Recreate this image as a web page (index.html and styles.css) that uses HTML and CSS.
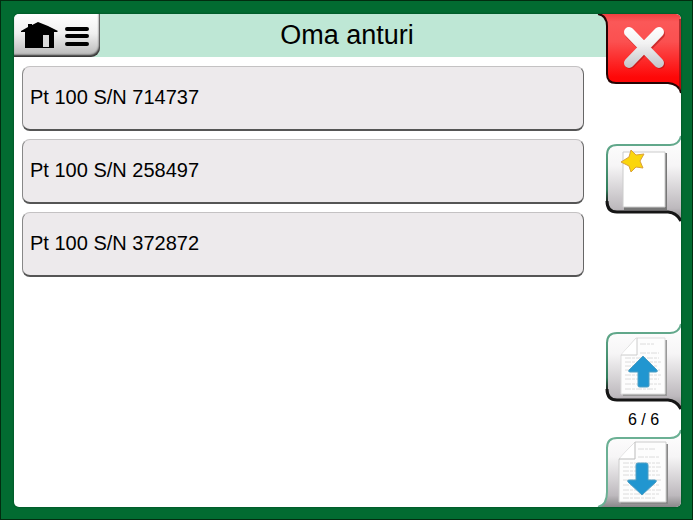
FILE: index.html
```html
<!DOCTYPE html>
<html lang="fi">
<head>
    <meta charset="UTF-8">
    <meta name="viewport" content="width=device-width, initial-scale=1.0">
    <title>Oma anturi</title>
    <link rel="stylesheet" href="styles.css">
</head>
<body>
    <div class="panel">
        <main class="main">
            <header class="header">
                <button type="button" class="menu" aria-label="Valikko">
                    <svg width="70" height="30" viewBox="0 0 70 30">
                        <path d="M-1 10 L6 6 V3 H10 V4 L16 1 L26 5 L36 10 L35 11 H32 V27 H3 V11 H-1 Z"/>
                        <path d="M21 14 H27 V26 H21 Z" fill="#dcdcdc"/>
                        <path d="M45 8 H65 M45 15 H65 M45 23 H65" stroke="#000" stroke-width="4" stroke-linecap="round"/>
                    </svg>
                </button>
                <h1 class="title">Oma anturi</h1>
            </header>
            <div class="list">
                <button type="button" class="item">Pt 100 S/N 714737</button>
                <button type="button" class="item">Pt 100 S/N 258497</button>
                <button type="button" class="item">Pt 100 S/N 372872</button>
            </div>
        </main>

        <nav class="side">
            <button type="button" class="tab" aria-label="Sulje">
                <svg width="83" height="80" viewBox="0 0 83 80">
                    <defs>
                        <linearGradient id="red" x1="0" y1="0" x2="0" y2="1">
                            <stop offset="0" stop-color="#f04040"/>
                            <stop offset="0.1" stop-color="#fb5858"/>
                            <stop offset="0.35" stop-color="#fb5050"/>
                            <stop offset="0.8" stop-color="#fe0808"/>
                            <stop offset="1" stop-color="#f00"/>
                        </linearGradient>
                        <linearGradient id="cross" gradientUnits="userSpaceOnUse" x1="0" y1="13" x2="0" y2="54">
                            <stop offset="0" stop-color="#fff"/>
                            <stop offset="0.4" stop-color="#f2f2f2"/>
                            <stop offset="1" stop-color="#c4c4c8"/>
                        </linearGradient>
                        <linearGradient id="grey" x1="0" y1="0" x2="0" y2="1">
                            <stop offset="0" stop-color="#fff"/>
                            <stop offset="0.35" stop-color="#f6f5f6"/>
                            <stop offset="0.85" stop-color="#bdb9bd"/>
                            <stop offset="1" stop-color="#8a888a"/>
                        </linearGradient>
                        <linearGradient id="edge" x1="0" y1="0" x2="0" y2="1">
                            <stop offset="0" stop-color="#6bb094"/>
                            <stop offset="0.8" stop-color="#2f7d5a"/>
                            <stop offset="1" stop-color="#1a1a1a"/>
                        </linearGradient>
                    </defs>
                    <path d="M0 0 C6 1 9 5 9 12 V60 Q9 69 18 69 H70 Q81 70 83 79 V5 Q83 0 78 0 Z" fill="url(#red)"/>
                    <path d="M0 0 C6 1 9 5 9 12 V60 Q9 69 18 69 H70 Q81 70 83 79" fill="none" stroke="#250303" stroke-width="2"/>
                    <path d="M82 76 V5" stroke="#7a1414" stroke-opacity="0.6" stroke-width="2"/>
                    <path d="M32 20 L62 50 M62 20 L32 50" stroke="#a01010" stroke-opacity="0.5" stroke-width="10" stroke-linecap="round"/>
                    <path d="M31 18 L61 49 M61 18 L31 49" stroke="url(#cross)" stroke-width="10" stroke-linecap="round"/>
                </svg>
            </button>

            <button type="button" class="tab tab-new" aria-label="Uusi">
                <svg width="83" height="87" viewBox="0 0 83 87">
                    <path d="M83 0 Q81 9 72 9 H19 Q9 9 9 19 V67 Q9 76 19 76 H70 Q79 77 83 85 Z" fill="url(#grey)"/>
                    <path d="M83 0 Q81 9 72 9 H19 Q9 9 9 19 V67" fill="none" stroke="url(#edge)" stroke-width="2"/>
                    <path d="M9 65 Q9 76 19 76 H70 Q79 77 83 85" fill="none" stroke="#151515" stroke-width="3"/>
                    <path d="M26 17 H69 V74 H26 Z" fill="#777"/>
                    <path d="M25 16 H67 V71 H25 Z" fill="#fff" stroke="#ccc"/>
                    <path d="M33 14 L38 19 L46 18 L42 25 L45 32 L38 31 L33 36 L31 30 L23 26 L31 21 Z" fill="#fbd60c" stroke="#d9a13c" stroke-width="1" stroke-linejoin="round"/>
                </svg>
            </button>

            <button type="button" class="tab tab-up" aria-label="Edellinen sivu">
                <svg width="83" height="87" viewBox="0 0 83 87">
                    <path d="M83 0 Q81 9 72 9 H19 Q9 9 9 19 V67 Q9 76 19 76 H70 Q79 77 83 85 Z" fill="url(#grey)"/>
                    <path d="M83 0 Q81 9 72 9 H19 Q9 9 9 19 V67" fill="none" stroke="url(#edge)" stroke-width="2"/>
                    <path d="M9 65 Q9 76 19 76 H70 Q79 77 83 85" fill="none" stroke="#151515" stroke-width="3"/>
                    <path d="M25 33 L40 16 H69 V72 H25 Z" fill="#999"/>
                    <path d="M23 31 L38 14 H67 V70 H23 Z" fill="#fdfdfd" stroke="#ddd"/>
                    <path d="M23 31 H39 V14" fill="#fff" stroke="#ccc"/>
                    <path d="M42 20 H56 M42 29 H61 M27 34 H61 M27 38 H63 M27 42 H60 M27 46 H62 M27 51 H63 M27 55 H61 M27 60 H63 M27 65 H58" stroke="#dcdcdc" stroke-width="1" stroke-dasharray="6 1 3 1"/>
                    <path d="M45 32 L59 46 Q60 48 58 48 H51 V62 Q51 63 49 63 H42 Q40 63 40 62 V48 H32 Q30 48 31 46 Z" fill="#2196d0" stroke="#4f9fc4" stroke-linejoin="round"/>
                </svg>
            </button>

            <div class="count">6 / 6</div>

            <button type="button" class="tab" aria-label="Seuraava sivu">
                <svg width="83" height="77" viewBox="0 0 83 77">
                    <path d="M83 0 Q81 8 72 8 H19 Q9 8 9 18 V62 Q9 75 0 77 H79 Q83 77 83 73 Z" fill="url(#grey)"/>
                    <path d="M83 0 Q81 8 72 8 H19 Q9 8 9 18 V62 Q9 75 0 77" fill="none" stroke="#6bb094" stroke-width="2"/>
                    <path d="M23 31 L38 14 H70 V74 H23 Z" fill="#888"/>
                    <path d="M21 29 L37 12 H68 V72 H21 Z" fill="#fdfdfd" stroke="#ccc"/>
                    <path d="M21 29 H37 V12" fill="#fff" stroke="#bbb"/>
                    <path d="M40 19 H57 M40 27 H62 M25 33 H62 M25 37 H63 M25 41 H60 M25 45 H62 M25 50 H63 M25 55 H61 M25 60 H63 M25 64 H61 M25 68 H58" stroke="#dcdcdc" stroke-width="1" stroke-dasharray="6 1 3 1"/>
                    <path d="M44 65 L30 52 Q29 50 31 50 H38 V35 Q38 33 40 33 H48 Q50 33 50 35 V50 H57 Q59 50 58 52 Z" fill="#2196d0" stroke="#4f9fc4" stroke-linejoin="round"/>
                </svg>
            </button>
        </nav>
    </div>
</body>
</html>
```
FILE: styles.css
```css
* {
    box-sizing: border-box;
}
body {
    font-family: "Liberation Sans", Arial, sans-serif;
    margin: 0;
    min-height: 100vh;
    padding: 13px 11px 12px 13px;
    border: 1px solid #022c10;
    background-color: #026b31;
    color: #000;
    display: flex;
}
button {
    font: inherit;
    color: inherit;
    border: none;
    background: none;
    padding: 0;
    cursor: pointer;
}
svg {
    display: block;
    overflow: visible;
}
.panel {
    flex: 1;
    display: grid;
    grid-template-columns: 1fr 75px;
    background-color: #fff;
    border-radius: 5px;
    overflow: hidden;
    box-shadow: 0 0 2px #013d1b;
}
.header {
    display: flex;
    align-items: center;
    height: 43px;
    background-color: #bee7d5;
}
.menu {
    width: 86px;
    height: 43px;
    padding: 6px 8px;
    background: linear-gradient(#fff, #f0f0f0 45%, #b5b5b5);
    border-radius: 5px 0 9px 0;
    box-shadow: inset -1px -2px 2px #333;
}
.title {
    flex: 1;
    margin: 0;
    padding-right: 12px;
    font-size: 27px;
    font-weight: normal;
    text-align: center;
}
.list {
    display: flex;
    flex-direction: column;
    gap: 8px;
    padding: 9px 22px 9px 8px;
}
.item {
    height: 65px;
    padding: 0 7px 2px;
    font-size: 20px;
    text-align: left;
    background-color: #edeaec;
    border: 1px solid;
    border-color: #c4c2c3 #666 #555 #888;
    border-bottom-width: 2px;
    border-radius: 8px;
}
.side {
    display: flex;
    flex-direction: column;
    margin-left: -8px;
}
.tab-new {
    margin-top: 42px;
}
.tab-up {
    margin-top: auto;
}
.count {
    height: 19px;
    padding-left: 8px;
    font-size: 16px;
    line-height: 18px;
    text-align: center;
}
```
